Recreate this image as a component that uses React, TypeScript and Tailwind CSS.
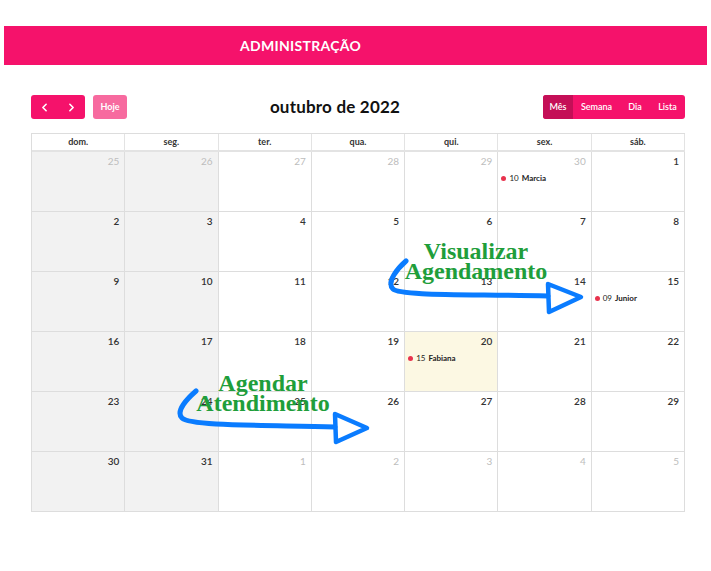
import React from 'react';
import { ChevronLeft, ChevronRight } from 'lucide-react';

type Cell = { day: number; other?: boolean; event?: { time: string; name: string } };

const weekDays = ['dom.', 'seg.', 'ter.', 'qua.', 'qui.', 'sex.', 'sáb.'];

const weeks: Cell[][] = [
    [
        { day: 25, other: true }, { day: 26, other: true }, { day: 27, other: true }, { day: 28, other: true },
        { day: 29, other: true }, { day: 30, other: true, event: { time: '10', name: 'Marcia' } }, { day: 1 },
    ],
    [2, 3, 4, 5, 6, 7, 8].map(d => ({ day: d })),
    [9, 10, 11, 12, 13, 14].map(d => ({ day: d } as Cell)).concat([{ day: 15, event: { time: '09', name: 'Junior' } }]),
    [16, 17, 18, 19].map(d => ({ day: d } as Cell)).concat([{ day: 20, event: { time: '15', name: 'Fabiana' } }, { day: 21 }, { day: 22 }]),
    [23, 24, 25, 26, 27, 28, 29].map(d => ({ day: d })),
    [
        { day: 30 }, { day: 31 }, { day: 1, other: true }, { day: 2, other: true },
        { day: 3, other: true }, { day: 4, other: true }, { day: 5, other: true },
    ],
];

const CalendarCell: React.FC<{ cell: Cell; col: number }> = ({ cell, col }) => {
    const isToday = cell.day === 20 && !cell.other;
    const bg = isToday ? 'bg-[#fcf8e3]' : col < 2 ? 'bg-[#f2f2f2]' : 'bg-white';
    return (
        <div className={`h-[60px] border-r border-b border-[#dddddd] ${bg} flex flex-col`}>
            <div className={`text-right pr-[5px] pt-[3px] text-[10px] leading-[12px] ${cell.other ? 'text-[#bdbdbd]' : 'text-[#333] font-semibold'}`}>
                {cell.day}
            </div>
            {cell.event && (
                <div className="flex items-center gap-[3px] pl-[3px] mt-[6px] text-[8px] leading-[10px] text-[#222]">
                    <span className="w-[5px] h-[5px] rounded-full bg-[#e8334d]" />
                    <span>{cell.event.time}</span>
                    <span className="font-bold">{cell.event.name}</span>
                </div>
            )}
        </div>
    );
};

const App: React.FC = () => {
    return (
        <div className="relative w-[711px] h-[571px] bg-white pt-[26px] font-['Lato','Liberation_Sans',sans-serif]">
            <div className="mx-[4px] h-[39px] bg-[#f5126b] flex items-center pl-[236px]">
                <span className="text-white font-bold text-[14px] tracking-[0.3px]">ADMINISTRAÇÃO</span>
            </div>

            <div className="pl-[31px] pr-[26px]">
                <div className="mt-[30px] h-[24px] flex items-center justify-between">
                    <div className="flex items-center gap-[8px]">
                        <div className="flex h-[24px] w-[54px] rounded-[3px] bg-[#f5126b] text-white">
                            <div className="flex-1 flex items-center justify-center"><ChevronLeft size={13} strokeWidth={3} /></div>
                            <div className="flex-1 flex items-center justify-center"><ChevronRight size={13} strokeWidth={3} /></div>
                        </div>
                        <div className="h-[24px] w-[34px] rounded-[3px] bg-[#f76a9f] text-white text-[9px] font-bold flex items-center justify-center">Hoje</div>
                    </div>
                    <h2 className="text-[17px] font-bold text-[#111] tracking-[0.2px]">outubro de 2022</h2>
                    <div className="flex h-[24px] rounded-[3px] overflow-hidden bg-[#f5126b] text-white text-[9px] font-semibold">
                        <div className="w-[30px] bg-[#c40f57] flex items-center justify-center">Mês</div>
                        <div className="w-[47px] flex items-center justify-center">Semana</div>
                        <div className="w-[30px] flex items-center justify-center">Dia</div>
                        <div className="w-[35px] flex items-center justify-center">Lista</div>
                    </div>
                </div>

                <div className="mt-[14px] border-l border-t border-[#dddddd]">
                    <div className="grid grid-cols-7">
                        {weekDays.map(d => (
                            <div key={d} className="h-[18px] border-r border-b-2 border-[#e3e3e3] flex items-center justify-center text-[9px] font-bold text-[#333]">
                                {d}
                            </div>
                        ))}
                    </div>
                    {weeks.map((week, wi) => (
                        <div key={wi} className="grid grid-cols-7">
                            {week.map((cell, ci) => <CalendarCell key={ci} cell={cell} col={ci} />)}
                        </div>
                    ))}
                </div>
            </div>

            {/* annotations */}
            <svg className="absolute left-0 top-0 pointer-events-none" width="711" height="571" fill="none" stroke="#0a7cff" strokeWidth="5" strokeLinecap="round" strokeLinejoin="round">
                <path d="M406 261 C398 268 386 282 393 289 C400 296 470 294 548 296" />
                <path d="M548 284 L581 297 L549 312 Z" strokeWidth="4.5" />
                <path d="M196 391 C188 398 175 411 182 418 C190 426 260 425 335 427" />
                <path d="M335 414 L367 428 L336 442 Z" strokeWidth="4.5" />
            </svg>
            <div className="absolute left-[392px] top-[241px] w-[168px] text-center font-['Liberation_Serif',serif] font-bold text-[24px] leading-[20px] text-[#1f9e3b]">
                Visualizar<br />Agendamento
            </div>
            <div className="absolute left-[182px] top-[373px] w-[162px] text-center font-['Liberation_Serif',serif] font-bold text-[24px] leading-[20px] text-[#1f9e3b]">
                Agendar<br />Atendimento
            </div>
        </div>
    );
};

export default App;
